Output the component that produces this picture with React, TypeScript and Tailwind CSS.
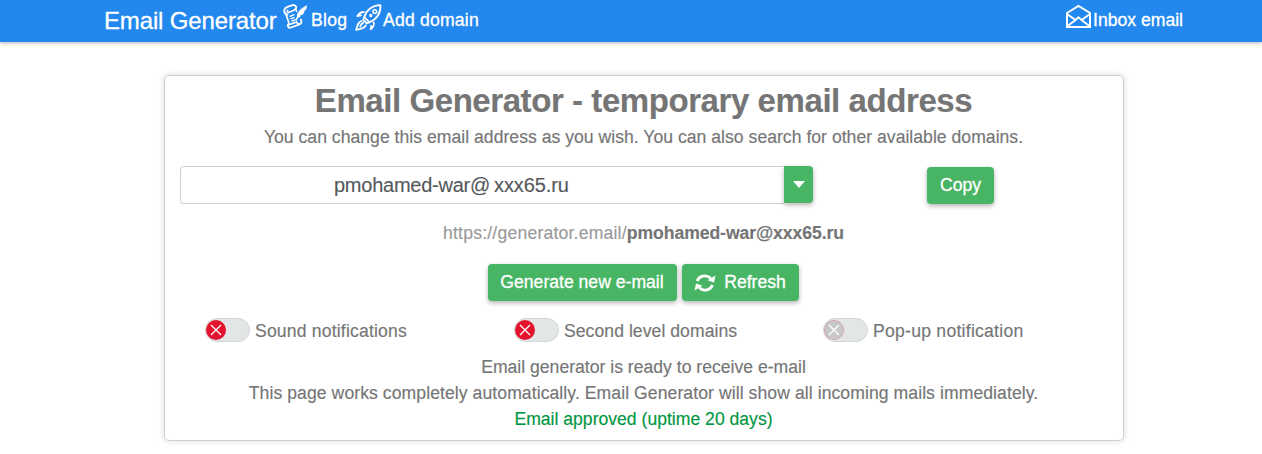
import { useState } from "react";

interface ToggleProps {
  label: string;
  tracking: string;
  disabled?: boolean;
}

function ScrollIcon() {
  return (
    <svg width="25" height="25" viewBox="0 0 25 25" fill="none" stroke="currentColor" strokeWidth="1.8" strokeLinecap="round" strokeLinejoin="round">
      <path d="M4.5 10.8C2 10.5 0.9 8 1.3 6C1.600 4.300 3 3.500 4.500 2.900L9.500 1.200C12 0.600 13.800 2.600 13 4.500L11.500 6L5.500 8.500C4.300 8.800 3.800 7.500 4.500 6.500" />
      <path d="M2.800 9.800L5.800 18.500C6.200 20 5.300 20.600 4.800 21.200C4.800 23.500 6.300 24.100 8 23.500L16.500 20.400C18.800 19.400 18.900 17.500 17.800 15.500" />
      <path d="M5 21L13.600 18C14.300 19.800 15 20.500 16.500 20.200" />
      <path d="M7 12.300L11 10.700M8 14.700L11 13.600M9 17L12.500 15.700M13 5.500L13.600 7.500" strokeWidth="1.4" />
      <path d="M13.800 14C13.500 9 17 4.500 24 1.300C23.900 3.200 23.500 4.900 22.500 6.300L20.900 7L21.500 8C20.700 9.500 19.800 10.500 18.500 11.300L17.300 11.100L17.500 12.500C16.500 13.400 15.400 14 13.800 14Z" fill="currentColor" stroke="none" />
      <path d="M13 16L16.500 10.500" strokeWidth="1.4" />
    </svg>
  );
}

function RocketIcon() {
  return (
    <svg width="28" height="27" viewBox="0 0 28 27" fill="none" stroke="currentColor" strokeWidth="1.8" strokeLinecap="round" strokeLinejoin="round">
      <path d="M9.300 13.200C11 6.500 17 1.500 25.500 1.200C25.800 9.500 21 15.300 14.500 18.300Z" />
      <path d="M9.300 13.200L8.200 15.800L12 19.500L14.500 18.300" />
      <circle cx="19.800" cy="7.600" r="1.900" strokeWidth="1.5" />
      <circle cx="15.800" cy="11.500" r="0.900" strokeWidth="1.5" />
      <path d="M8.800 8C6 8 4 9.500 2.300 12L6 11.300M18.800 18.500C19.300 21.300 18 23.500 15.700 25.200L16.200 22" />
      <path d="M6.500 17C3.200 18 2.300 21.500 1.200 25.800C5.600 25.300 9 24.500 10.700 21.500M8.200 18.800C6.600 19.800 5.700 21 5.200 22.500" />
    </svg>
  );
}

function InboxIcon() {
  return (
    <svg width="25" height="25" viewBox="0 0 25 25" fill="none" stroke="currentColor" strokeWidth="2">
      <path d="M1 9L12.500 2L24 9V23H1Z" />
      <path d="M1 10L9.500 16L12.500 13.200L15.500 16L24 10M1 22.500L9.500 16M24 22.500L15.500 16" strokeWidth="1.900" />
    </svg>
  );
}

function RefreshIcon() {
  return (
    <svg width="22" height="20" viewBox="0 0 22 20" fill="none" stroke="currentColor" strokeWidth="2.8">
      <path d="M3.200 8C4.800 3.500 11.500.500 16.800 5.200" />
      <path d="M21.500 2.500L20 9.500L13.500 7.300Z" fill="currentColor" stroke="none" />
      <path d="M18.500 12C16.800 16.500 10.500 19.500 5.200 14.800" />
      <path d="M.500 17.500L2 10.500L8.500 12.700Z" fill="currentColor" stroke="none" />
    </svg>
  );
}

function Toggle({ label, tracking, disabled = false }: ToggleProps) {
  return (
    <label className="flex h-6 items-center gap-[5px]">
      <span className="flex h-6 w-[45px] items-center rounded-full border border-[#d2d6d6] bg-[#e2e6e6]">
        <span
          className={
            disabled
              ? "flex size-5 items-center justify-center rounded-full border border-dotted border-[#e08088] bg-[#c8c8c8] text-white"
              : "flex size-5 items-center justify-center rounded-full bg-[#e4132d] text-white"
          }
        >
          <svg className="shrink-0" width="12" height="12" viewBox="0 0 12 12" stroke="currentColor" strokeWidth="1.300">
            <path d="M1 1L11 11M11 1L1 11" />
          </svg>
        </span>
      </span>
      <span className={`mt-0.5 whitespace-nowrap ${tracking}`}>{label}</span>
    </label>
  );
}

const buttonClass =
  "flex h-[37px] items-center justify-center rounded bg-[#48b564] whitespace-nowrap text-white shadow-[0_2px_5px_rgba(0,0,0,0.3)] [-webkit-text-stroke:0.3px_white]";

export default function App() {
  const [name, setName] = useState("pmohamed-war@");

  return (
    <div className="h-[454px] overflow-hidden bg-white font-['Liberation_Sans',sans-serif] text-[17.6px] text-[#757575] [-webkit-text-stroke:0.15px_currentColor]">
      <header className="flex h-[42px] items-center bg-[#2388ed] pr-[79px] pl-[104px] text-white shadow-[0_1px_4px_rgba(0,0,0,0.3)] [-webkit-text-stroke:0.3px_white]">
        <a className="w-[179px] text-2xl tracking-[-0.15px] whitespace-nowrap">Email Generator</a>
        <a className="flex w-[72px] items-center gap-[3px] tracking-[0.3px]">
          <span className="-mt-2">
            <ScrollIcon />
          </span>
          <span className="-mt-0.5">Blog</span>
        </a>
        <a className="flex items-center tracking-[0.2px] whitespace-nowrap">
          <span className="-mt-1.5">
            <RocketIcon />
          </span>
          <span className="-mt-0.5">Add domain</span>
        </a>
        <a className="ml-auto flex items-center gap-0.5 whitespace-nowrap">
          <span className="-mt-2">
            <InboxIcon />
          </span>
          <span className="-mt-0.5">Inbox email</span>
        </a>
      </header>

      <main className="mt-[33px] ml-[164px] h-[366px] w-[960px] rounded-[5px] border border-[#d0d0d0] bg-white pr-px text-center shadow-[0_0_6px_rgba(0,0,0,0.15)]">
        <h1 className="h-12 text-[33px] leading-[50px] font-bold tracking-[-0.43px] whitespace-nowrap">
          Email Generator - temporary email address
        </h1>
        <p className="leading-[26px] tracking-[0.02px] whitespace-nowrap">
          You can change this email address as you wish. You can also search for other available domains.
        </p>

        <div className="mt-4 flex pl-[15px]">
          <div className="flex h-[38px] w-[604px] items-center rounded-l border border-r-0 border-[#cfcfcf] text-xl text-[#55595c]">
            <input
              value={name}
              onChange={(e) => setName(e.target.value)}
              className="w-[309px] text-right tracking-[-0.25px] outline-none"
            />
            <span className="ml-[4px] tracking-[-0.1px]">xxx65.ru</span>
          </div>
          <button className="flex h-[37px] w-[29px] items-center justify-center rounded-r bg-[#48b564] text-white shadow-[0_2px_5px_rgba(0,0,0,0.3)]">
            <svg width="12" height="7" viewBox="0 0 12 7" fill="currentColor">
              <path d="M0 0H12L6 7Z" />
            </svg>
          </button>
          <button className={`${buttonClass} mt-px ml-[114px] w-[67px]`}>Copy</button>
        </div>

        <p className="mt-4 leading-[26px] tracking-[0.2px] whitespace-nowrap text-[#999]">
          https://generator.email/<b className="tracking-[-0.07px] text-[#757575]">pmohamed-war@xxx65.ru</b>
        </p>

        <div className="mt-[18px] flex justify-center gap-[5px] pr-px">
          <button className={`${buttonClass} w-[189px]`}>Generate new e-mail</button>
          <button className={`${buttonClass} w-[117px] gap-2`}>
            <RefreshIcon />
            Refresh
          </button>
        </div>

        <div className="mt-[17px] ml-10 grid h-6 grid-cols-[309px_309px_309px]">
          <Toggle label="Sound notifications" tracking="tracking-[0.17px]" />
          <Toggle label="Second level domains" tracking="tracking-[0.05px]" />
          <Toggle label="Pop-up notification" tracking="tracking-[0.25px]" disabled />
        </div>

        <div className="mt-3 leading-[26px] whitespace-nowrap">
          <p>Email generator is ready to receive e-mail</p>
          <p className="tracking-[0.07px]">
            This page works completely automatically. Email Generator will show all incoming mails immediately.
          </p>
          <p className="text-[#009640]">Email approved (uptime 20 days)</p>
        </div>
      </main>
    </div>
  );
}
